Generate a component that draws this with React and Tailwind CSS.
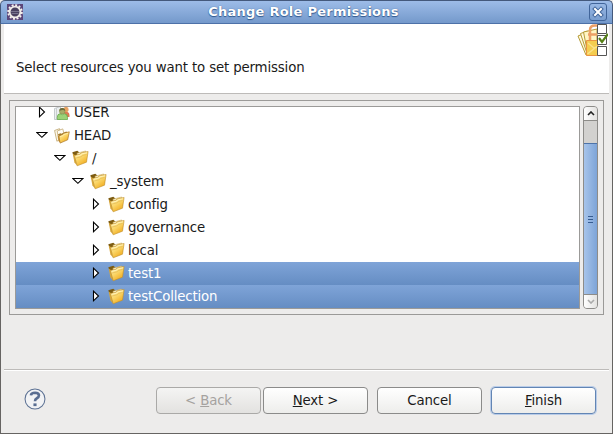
import React from "react";

function Folder() {
  return (
    <svg width="18" height="18" viewBox="0 0 18 18" className="shrink-0">
      <path d="M.3 2.200l5-1.400 1.200 1 1.500 2L4 9 1.500 6z" fill="#7d5c12" />
      <path d="M.8 3.800l2.500 1.400L5 15.500l-2.600-3z" fill="#d8a83c" />
      <path d="M5 3.200l8.700-2.200.8 9L6 13z" fill="#fbf3cf" stroke="#c9a650" strokeWidth=".6" />
      <path d="M2.400 5.500l5.600-1.300 1-1.300 7.100-1.400-1.600 10.700-9.300 3.600z" fill="url(#face)" stroke="#bd8d2b" strokeWidth=".6" />
      <path d="M3.700 6.300l5-1.100 1-1.300 5.300-1.100" stroke="#fff6c8" strokeWidth=".8" fill="none" />
      <path d="M4.200 8l5.300-1.300 1-1.200 4-1" stroke="#dcb352" strokeWidth=".6" fill="none" />
    </svg>
  );
}

function HeadIcon() {
  return (
    <svg width="16" height="16" viewBox="0 0 16 16" className="shrink-0">
      <path d="M.6 2.500L5.500.7l2 9-4.600 3.600z" fill="#fdf9ea" stroke="#bda36b" strokeWidth=".8" />
      <path d="M3.200 3L8.800.9l1.400 6-5.700 4.500z" fill="#fffdf5" stroke="#c4ab76" strokeWidth=".8" />
      <path d="M3.800 6.500l2.500-1.300 1 .5 5-2.300 1.500 1.400-7 5.500z" fill="#a37a2a" />
      <path d="M3.900 7l2 2.200.5 5.600-2-1.800z" fill="#c58c2c" />
      <path d="M4.900 8l3.700-1.500.7-1.100 6-1.600-1.600 8-7.600 3.300z" fill="url(#face)" stroke="#a9772a" strokeWidth=".7" />
      <path d="M6.200 8.600l2.900-1 .7-1.100 4.300-1.200" stroke="#fff2b5" strokeWidth=".8" fill="none" />
    </svg>
  );
}

function UserIcon() {
  return (
    <svg width="16" height="16" viewBox="0 0 16 16" className="shrink-0">
      <path d="M.5 3.500v11h6V1.500z" fill="#eceff0" stroke="#b9bfc1" strokeWidth=".8" />
      <path d="M2.500 3v11" stroke="#c9ced0" />
      <circle cx="12" cy="4.500" r="2.600" fill="#e8a262" />
      <path d="M10 7h3.500q2 .5 2 3v2H11z" fill="#db7a54" />
      <path d="M3.300 14.500v-2.200q0-3.300 2.700-3.600l2.300 1 2.200-1q3 .4 3 3.600v2.200z" fill="#9bd277" stroke="#5ba33e" strokeWidth=".7" />
      <circle cx="8.200" cy="6.200" r="2.800" fill="#a8ad68" stroke="#7d8a44" strokeWidth=".5" />
      <path d="M5.300 5.800Q5.500 2.800 8.500 3q2.800.3 2.700 3-1.500-1.800-5.900-.2z" fill="#6c6a3a" />
    </svg>
  );
}

function Arrow({ open }) {
  return (
    <svg width="12" height="13" viewBox="0 0 12 13" className="shrink-0">
      <path d={open ? "M.7 3.500h10.300L5.900 8.300z" : "M3.500 1.200v9.600l5-4.800z"} fill="#fff" stroke="#000" strokeWidth="1.100" />
    </svg>
  );
}

const rows = [
  { label: "USER", pad: "pl-5", icon: UserIcon },
  { label: "HEAD", pad: "pl-5", icon: HeadIcon, open: true },
  { label: "/", pad: "pl-[38px]", open: true },
  { label: "_system", pad: "pl-[56px]", open: true },
  { label: "config", pad: "pl-[74px]" },
  { label: "governance", pad: "pl-[74px]" },
  { label: "local", pad: "pl-[74px]" },
  { label: "test1", pad: "pl-[74px]", selected: true },
  { label: "testCollection", pad: "pl-[74px]", selected: true },
];

function Row({ label, pad, icon: Icon = Folder, open, selected }) {
  return (
    <div className={`flex h-[23px] shrink-0 items-center ${pad} ${selected ? "bg-linear-to-b from-[#7fa4d8] to-[#658dc3] text-white" : ""}`}>
      <Arrow open={open} />
      <div className="ml-[6px] flex w-[18px] shrink-0"><Icon /></div>
      <span className="ml-[2px] whitespace-pre">{label}</span>
    </div>
  );
}

function EclipseIcon() {
  return (
    <svg width="16" height="16" viewBox="0 0 16 16">
      <path d="M0 0h16v16H0z" fill="#5b4679" />
      <circle cx="8" cy="8" r="6.900" fill="none" stroke="#f6f3ee" strokeWidth="1.800" strokeDasharray="2 1.610" />
      <circle cx="8" cy="8" r="5.400" fill="#49405f" stroke="#f0ece8" strokeWidth="1.900" />
      <path d="M4 7.500h8M4.500 9.500h7" stroke="#77738d" />
    </svg>
  );
}

function BannerIcon() {
  return (
    <svg width="31" height="33" viewBox="0 0 31 33">
      <path d="M1 12l6-2.500 7 19.500-5 2z" fill="#fffbe0" stroke="#b69b35" />
      <path d="M3.500 9.500l7-2.500 5 22-5 2z" fill="#fffbe0" stroke="#b69b35" />
      <path d="M6.500 8L20 5v22l-9 4z" fill="#fff6c4" stroke="#b69b35" />
      <path d="M13 16V6q0-4.500 5-4.500h3M11 10.500h9" fill="none" stroke="#eda066" strokeWidth="2.500" />
      <path d="M9.500 16.500H21v15H9.500z" fill="#f4cd50" stroke="#e99442" />
      <path d="M10.500 30l10-8M11 19l6 5 4-1" fill="none" stroke="#fbe28a" strokeWidth="1.500" />
      <path d="M20.500 .5h9v9h-9zM20.500 11.500h9v9h-9zM20.500 22.500h9v9h-9z" fill="#fff" stroke="#555" />
      <path d="M22 14l3 4 6-8" fill="none" stroke="#568017" strokeWidth="2.200" />
    </svg>
  );
}

function Button({ children, className }) {
  return <div className={`flex h-[27px] w-[105px] items-center justify-center rounded-[4px] border whitespace-pre ${className}`}><span>{children}</span></div>;
}

const normal = "border-[#8b8b8a] bg-linear-to-b from-white to-[#ededeb]";

export default function App() {
  return (
    <div className="flex h-[434px] w-[613px] flex-col overflow-hidden bg-[#edeceb] font-['DejaVu_Sans',sans-serif] text-[13.333px] leading-[16px] tracking-[-0.15px] text-[#1a1a1a]">
      <svg width="0" height="0" className="absolute">
        <defs>
          <linearGradient id="face" x1="0" y1="0" x2=".7" y2="1"><stop stopColor="#fff0b0" /><stop offset=".5" stopColor="#fbd76a" /><stop offset="1" stopColor="#f0a818" /></linearGradient>
        </defs>
      </svg>
      <header className="flex h-6 shrink-0 items-center rounded-t-[5px] border border-[#44597c] border-b-[#4d71a8] bg-linear-to-b from-[#9dbce8] to-[#7499cb] pr-[5px] pl-[6px]">
        <EclipseIcon />
        <h1 className="flex-1 pr-[5px] text-center text-[13px] font-bold tracking-[.25px] text-white [text-shadow:0_0_1px_#31598f,0_1px_1px_#31598f]">Change Role Permissions</h1>
        <div className="flex h-[18px] w-[18px] items-center justify-center rounded-[3px] border border-[#41659a]">
          <svg width="12" height="12" viewBox="0 0 12 12"><path d="M3 3l6 6M9 3l-6 6" stroke="#41659a" strokeWidth="4" strokeLinecap="square" /><path d="M3 3l6 6M9 3l-6 6" stroke="#fff" strokeWidth="2" strokeLinecap="square" /></svg>
        </div>
      </header>
      <main className="flex flex-1 flex-col border-x border-b border-[#666462] px-[3px] pb-[3px]">
        <section className="flex h-[70px] shrink-0 justify-between border-b border-[#bdbbb9] bg-white pl-3">
          <p className="pt-9">Select resources you want to set permission</p>
          <div className="mr-[1px]"><BannerIcon /></div>
        </section>
        <section className="mt-[6px] ml-[5px] flex h-[215px] w-[595px] shrink-0 border border-[#9b9a98] p-[5px]">
          <div className="flex flex-1 flex-col justify-end overflow-hidden border border-[#9b9a98] bg-white">
            {rows.map((r) => <Row key={r.label} {...r} />)}
          </div>
          <div className="ml-[3px] flex w-[15px] flex-col overflow-hidden rounded-[4px] border border-[#8d8c89] bg-[#d2d1cf]">
            <div className="flex h-[14px] shrink-0 items-center justify-center border-b border-[#8d8c89] bg-linear-to-r from-white to-[#e3e2e0]">
              <svg width="8" height="5" viewBox="0 0 8 5"><path d="M1 4l3-3 3 3" fill="none" stroke="#222" strokeWidth="1.600" /></svg>
            </div>
            <div className="-mx-px mt-[22px] flex flex-1 flex-col items-center justify-center gap-[2px] border border-b-0 border-[#4d73a9] bg-linear-to-r from-[#a7c4ea] to-[#7da4d8]">
              <i className="h-px w-[5px] bg-[#365c91]" /><i className="h-px w-[5px] bg-[#365c91]" /><i className="h-px w-[5px] bg-[#365c91]" />
            </div>
            <div className="flex h-[14px] shrink-0 items-center justify-center border-t border-[#8d8c89] bg-linear-to-r from-white to-[#e3e2e0]">
              <svg width="8" height="5" viewBox="0 0 8 5"><path d="M1 1l3 3 3-3" fill="none" stroke="#aaa" strokeWidth="1.600" /></svg>
            </div>
          </div>
        </section>
        <footer className="mt-auto flex h-[61px] shrink-0 border-t border-[#bdbbb9] pt-[17px] pr-[13px] pl-[20px] shadow-[inset_0_1px_0_#fff]">
          <svg width="22" height="22" viewBox="0 0 21 21" className="mt-px"><circle cx="10.500" cy="10.500" r="9.500" fill="#f2f3f5" stroke="#5d7294" /><path d="M6.600 7q.3-2.500 4-2.500 3.600.1 3.700 2.500 0 1.700-2 2.800-1.800 1-1.800 2.800" fill="none" stroke="#596d91" strokeWidth="2.500" /><path d="M9 14.700h3v2.600H9z" fill="#596d91" /></svg>
          <Button className="ml-auto border-[#aaa9a7] bg-linear-to-b from-[#f4f4f3] to-[#e3e2e0] text-[#a5a29f]">&lt; <u>B</u>ack</Button>
          <Button className={`ml-[2px] ${normal}`}><u>N</u>ext &gt;</Button>
          <Button className={`ml-[9px] ${normal}`}>Cancel</Button>
          <Button className="ml-[9px] border-[#6285b4] bg-linear-to-b from-white to-[#ededeb] shadow-[0_0_0_1px_#b9cce8]"><u>F</u>inish</Button>
        </footer>
      </main>
    </div>
  );
}
